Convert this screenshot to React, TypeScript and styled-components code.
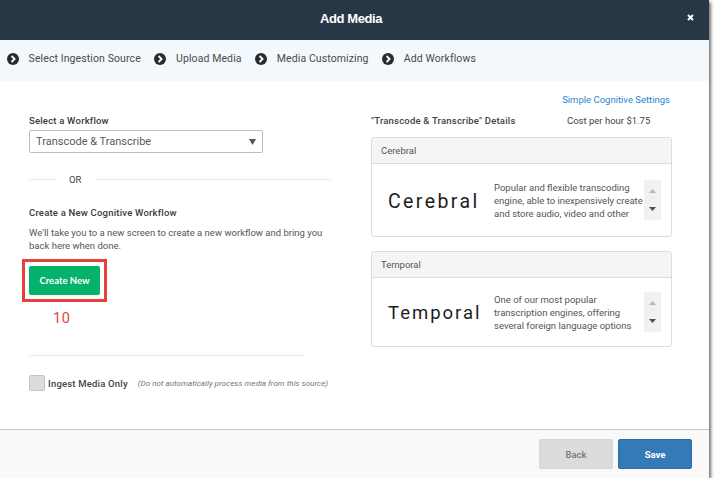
import React from 'react';
import styled, { createGlobalStyle } from 'styled-components';

const GlobalStyle = createGlobalStyle`
  html, body {
    margin: 0;
    padding: 0;
    background: #fff;
    font-family: Roboto, "Liberation Sans", sans-serif;
    color: #444;
  }
  * { box-sizing: border-box; }
`;

const Modal = styled.div`
  width: 709px;
  height: 478px;
  display: flex;
  flex-direction: column;
  background: #fff;
  box-shadow: 2px 2px 3px rgba(0, 0, 0, 0.55);
`;

const Header = styled.div`
  height: 40px;
  flex: none;
  display: flex;
  align-items: center;
  justify-content: center;
  position: relative;
  padding: 0 7px 4px 0;
  background: #283746;
  color: #fff;
  font-family: "Liberation Sans", sans-serif;
  font-size: 13px;
  font-weight: 700;
  letter-spacing: -0.4px;
`;

const CloseIcon = styled.svg`
  position: absolute;
  right: 15px;
  top: 14px;
  width: 7px;
  height: 7px;
`;

const Steps = styled.div`
  height: 41px;
  flex: none;
  display: flex;
  align-items: center;
  padding: 0 0 4px 7px;
  background: #f3f8fc;
`;

const Step = styled.div`
  display: flex;
  align-items: center;
  margin-right: 13.6px;
  font-size: 10.5px;
  letter-spacing: 0.1px;
  color: #4a4a4a;
  svg { margin-right: 9.6px; }
`;

const Body = styled.div`
  flex: 1;
  display: flex;
  min-height: 0;
`;

const LeftColumn = styled.div`
  width: 371px;
  flex: none;
  padding: 34px 0 0 29px;
`;

const RightColumn = styled.div`
  width: 301px;
  flex: none;
  padding-top: 13px;
`;

const Label = styled.div`
  font-size: 9.5px;
  line-height: 12px;
  color: #3a3a3a;
  font-weight: 500;
  letter-spacing: 0.2px;
`;

const Select = styled.div`
  width: 234px;
  height: 23px;
  margin-top: 3px;
  padding: 0 6px 1px;
  display: flex;
  align-items: center;
  justify-content: space-between;
  border: 1px solid #bdbdbd;
  border-radius: 2px;
  font-size: 11px;
  color: #5a5a5a;
`;

const SelectArrow = styled.svg`
  width: 7px;
  height: 7px;
`;

const OrRow = styled.div`
  width: 302px;
  margin-top: 20px;
  display: flex;
  align-items: center;
  font-size: 9.5px;
  color: #444;
  height: 12px;
`;

const OrLine = styled.div<{ $wide?: boolean }>`
  height: 1px;
  background: #e6e6e6;
  ${(p) => (p.$wide ? 'flex: 1;' : 'width: 26px;')}
`;

const OrText = styled.span`
  margin: 0 14px;
`;

const NewTitle = styled(Label)`
  margin-top: 22px;
`;

const Paragraph = styled.p`
  margin: 7px 0 0;
  width: 295px;
  font-size: 9.5px;
  line-height: 13px;
  color: #555;
`;

const Highlight = styled.div`
  width: 85px;
  height: 43px;
  margin: 7px 0 0 -7px;
  padding: 4px;
  border: 3px solid #e8403a;
`;

const CreateButton = styled.button`
  width: 71px;
  height: 29px;
  display: block;
  border: none;
  border-radius: 2px;
  padding: 0;
  background: #05b26b;
  color: #fff;
  font-family: Lato, sans-serif;
  font-size: 9.5px;
  font-weight: 700;
`;

const Callout = styled.div`
  margin: 8px 0 0 24px;
  font-size: 14.5px;
  line-height: 17px;
  color: #e8403a;
  letter-spacing: 0.7px;
`;

const Divider = styled.div`
  width: 275px;
  height: 1px;
  margin-top: 28px;
  background: #e8e8e8;
`;

const IngestRow = styled.div`
  margin-top: 19px;
  display: flex;
  align-items: center;
`;

const Checkbox = styled.div`
  width: 16px;
  height: 16px;
  border: 1px solid #c4c4c4;
  border-radius: 2px;
  background: #dcdcdc;
`;

const IngestLabel = styled.span`
  margin-left: 3px;
  font-size: 9.5px;
  font-weight: 500;
  color: #444;
  letter-spacing: 0.2px;
`;

const IngestNote = styled.span`
  margin-left: 10px;
  font-size: 8.1px;
  font-style: italic;
  color: #777;
`;

const CognitiveLink = styled.a`
  display: block;
  text-align: right;
  padding-right: 2px;
  font-size: 9.5px;
  line-height: 12px;
  color: #2a85d0;
`;

const DetailsRow = styled.div`
  margin-top: 9px;
  display: flex;
  font-size: 9.5px;
  line-height: 12px;
  color: #444;
  font-weight: 500;
  letter-spacing: 0.2px;
`;

const DetailsTitle = styled.span`
  width: 196px;
`;

const Cost = styled.span`
  font-weight: 400;
  letter-spacing: 0;
`;

const Panel = styled.div<{ $top: number; $bodyHeight: number }>`
  margin-top: ${(p) => p.$top}px;
  border: 1px solid #dcdcdc;
  border-radius: 3px;
  overflow: hidden;
  > div:last-child { height: ${(p) => p.$bodyHeight}px; }
`;

const PanelHead = styled.div`
  height: 26px;
  padding: 0 0 1px 9px;
  display: flex;
  align-items: center;
  background: #f5f5f5;
  border-bottom: 1px solid #dcdcdc;
  font-size: 9.5px;
  color: #555;
`;

const PanelBody = styled.div`
  display: flex;
  align-items: center;
  padding: 0 10px 0 16px;
`;

const EngineName = styled.div<{ $size: number; $spacing: number }>`
  width: 106px;
  flex: none;
  padding-top: 2px;
  font-family: Roboto, sans-serif;
  font-size: ${(p) => p.$size}px;
  letter-spacing: ${(p) => p.$spacing}px;
  color: #1d1d1d;
`;

const Description = styled.div`
  width: 150px;
  flex: none;
  font-size: 9.5px;
  line-height: 13px;
  color: #555;
  white-space: nowrap;
`;

const Scroller = styled.div`
  width: 17px;
  height: 40px;
  flex: none;
  margin-left: auto;
  display: flex;
  flex-direction: column;
  align-items: center;
  justify-content: space-between;
  padding: 9px 0;
  background: #f1f1f1;
`;

const Footer = styled.div`
  height: 49px;
  flex: none;
  display: flex;
  align-items: center;
  justify-content: flex-end;
  gap: 5px;
  padding: 0 17px 0 0;
  background: #f9f9f9;
  border-top: 1px solid #c8c8c8;
`;

const FooterButton = styled.button<{ $primary?: boolean }>`
  width: 74px;
  height: 30px;
  padding: 0;
  border-radius: 2px;
  font-family: Roboto, sans-serif;
  font-size: 9.5px;
  font-weight: ${(p) => (p.$primary ? 700 : 500)};
  color: ${(p) => (p.$primary ? '#fff' : '#777')};
  background: ${(p) => (p.$primary ? '#337ab7' : '#dcdcdc')};
  border: 1px solid ${(p) => (p.$primary ? '#2e6da4' : '#d6d6d6')};
`;

const StepIcon = () => (
  <svg width="12" height="12" viewBox="0 0 12 12">
    <circle cx="6" cy="6" r="6" fill="#2b2b2b" />
    <path d="M4.6 3 L7.6 6 L4.6 9" fill="none" stroke="#fff" strokeWidth="1.8" />
  </svg>
);

const ScrollArrow = ({ up }: { up?: boolean }) => (
  <svg width="7" height="4" viewBox="0 0 7 4">
    <path d={up ? 'M0 4 L3.5 0 L7 4 Z' : 'M0 0 L7 0 L3.5 4 Z'} fill={up ? '#b5b5b5' : '#505050'} />
  </svg>
);

const steps = ['Select Ingestion Source', 'Upload Media', 'Media Customizing', 'Add Workflows'];

const engines = [
  {
    name: 'Cerebral',
    top: 10,
    bodyHeight: 72,
    size: 19.5,
    spacing: 2.4,
    lines: ['Popular and flexible transcoding', 'engine, able to inexpensively create', 'and store audio, video and other'],
  },
  {
    name: 'Temporal',
    top: 14,
    bodyHeight: 68,
    size: 18.5,
    spacing: 2,
    lines: ['One of our most popular', 'transcription engines, offering', 'several foreign language options'],
  },
];

const App = () => (
  <>
    <GlobalStyle />
    <Modal>
      <Header>
        Add Media
        <CloseIcon viewBox="0 0 7 7">
          <path d="M1 1 L6 6 M6 1 L1 6" stroke="#fff" strokeWidth="1.9" />
        </CloseIcon>
      </Header>
      <Steps>
        {steps.map((step) => (
          <Step key={step}>
            <StepIcon />
            {step}
          </Step>
        ))}
      </Steps>
      <Body>
        <LeftColumn>
          <Label>Select a Workflow</Label>
          <Select>
            <span>Transcode &amp; Transcribe</span>
            <SelectArrow viewBox="0 0 7 7">
              <path d="M0 1 L7 1 L3.5 7 Z" fill="#555" />
            </SelectArrow>
          </Select>
          <OrRow>
            <OrLine />
            <OrText>OR</OrText>
            <OrLine $wide />
          </OrRow>
          <NewTitle>Create a New Cognitive Workflow</NewTitle>
          <Paragraph>
            We'll take you to a new screen to create a new workflow and bring you back here when done.
          </Paragraph>
          <Highlight>
            <CreateButton>Create New</CreateButton>
          </Highlight>
          <Callout>10</Callout>
          <Divider />
          <IngestRow>
            <Checkbox />
            <IngestLabel>Ingest Media Only</IngestLabel>
            <IngestNote>(Do not automatically process media from this source)</IngestNote>
          </IngestRow>
        </LeftColumn>
        <RightColumn>
          <CognitiveLink>Simple Cognitive Settings</CognitiveLink>
          <DetailsRow>
            <DetailsTitle>"Transcode &amp; Transcribe" Details</DetailsTitle>
            <Cost>Cost per hour $1.75</Cost>
          </DetailsRow>
          {engines.map((engine) => (
            <Panel key={engine.name} $top={engine.top} $bodyHeight={engine.bodyHeight}>
              <PanelHead>{engine.name}</PanelHead>
              <PanelBody>
                <EngineName $size={engine.size} $spacing={engine.spacing}>
                  {engine.name}
                </EngineName>
                <Description>
                  {engine.lines.map((line) => (
                    <div key={line}>{line}</div>
                  ))}
                </Description>
                <Scroller>
                  <ScrollArrow up />
                  <ScrollArrow />
                </Scroller>
              </PanelBody>
            </Panel>
          ))}
        </RightColumn>
      </Body>
      <Footer>
        <FooterButton>Back</FooterButton>
        <FooterButton $primary>Save</FooterButton>
      </Footer>
    </Modal>
  </>
);

export default App;
